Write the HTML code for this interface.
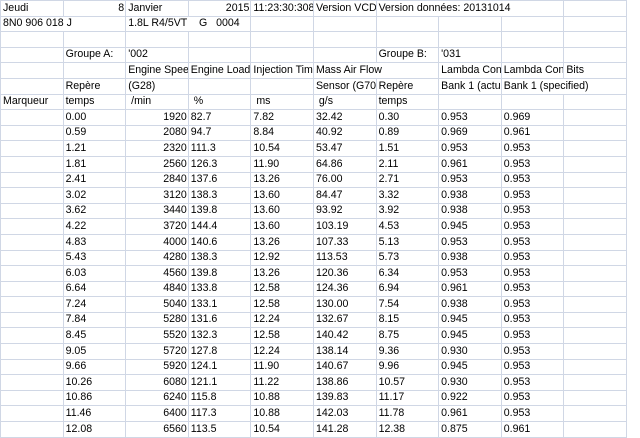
<!DOCTYPE html>
<html><head><meta charset="utf-8"><style>
html,body{margin:0;padding:0;background:#fff;width:640px;height:438px;overflow:hidden}
table{border-collapse:collapse;table-layout:fixed;width:626px;font-family:"Liberation Sans",sans-serif;font-size:10.6px;color:#000;position:absolute;left:0;top:0}
td{border:1px solid #d0d7e5;height:14.6px;padding:0 0 1px 2px;white-space:nowrap;overflow:hidden;line-height:13px;vertical-align:bottom;box-sizing:border-box}
td.r{text-align:right;padding:0 1px 1px 0}
tr{height:15.6px}
</style></head><body>
<table>
<colgroup><col style="width:62.6px"><col style="width:62.6px"><col style="width:62.6px"><col style="width:62.6px"><col style="width:62.6px"><col style="width:62.6px"><col style="width:62.6px"><col style="width:62.6px"><col style="width:62.6px"><col style="width:62.6px"></colgroup>
<tr><td>Jeudi</td><td class="r">8</td><td>Janvier</td><td class="r">2015</td><td>11:23:30:308</td><td>Version VCD</td><td colspan="3">Version données: 20131014</td><td></td></tr>
<tr><td colspan="2">8N0 906 018 J</td><td colspan="2">1.8L R4/5VT&nbsp;&nbsp;&nbsp; G&nbsp;&nbsp; 0004</td><td></td><td></td><td></td><td></td><td></td><td></td></tr>
<tr><td></td><td></td><td></td><td></td><td></td><td></td><td></td><td></td><td></td><td></td></tr>
<tr><td></td><td>Groupe A:</td><td>'002</td><td></td><td></td><td></td><td>Groupe B:</td><td>'031</td><td></td><td></td></tr>
<tr><td></td><td></td><td>Engine Speed</td><td>Engine Load</td><td>Injection Time</td><td colspan="2">Mass Air Flow</td><td>Lambda Control</td><td>Lambda Control</td><td>Bits</td></tr>
<tr><td></td><td>Repère</td><td>(G28)</td><td></td><td></td><td>Sensor (G70)</td><td>Repère</td><td>Bank 1 (actual)</td><td colspan="2">Bank 1 (specified)</td></tr>
<tr><td>Marqueur</td><td>temps</td><td>&nbsp;/min</td><td>&nbsp;%</td><td>&nbsp;ms</td><td>&nbsp;g/s</td><td>temps</td><td></td><td></td><td></td></tr>
<tr><td></td><td>0.00</td><td class="r">1920</td><td>82.7</td><td>7.82</td><td>32.42</td><td>0.30</td><td>0.953</td><td>0.969</td><td></td></tr>
<tr><td></td><td>0.59</td><td class="r">2080</td><td>94.7</td><td>8.84</td><td>40.92</td><td>0.89</td><td>0.969</td><td>0.961</td><td></td></tr>
<tr><td></td><td>1.21</td><td class="r">2320</td><td>111.3</td><td>10.54</td><td>53.47</td><td>1.51</td><td>0.953</td><td>0.953</td><td></td></tr>
<tr><td></td><td>1.81</td><td class="r">2560</td><td>126.3</td><td>11.90</td><td>64.86</td><td>2.11</td><td>0.961</td><td>0.953</td><td></td></tr>
<tr><td></td><td>2.41</td><td class="r">2840</td><td>137.6</td><td>13.26</td><td>76.00</td><td>2.71</td><td>0.953</td><td>0.953</td><td></td></tr>
<tr><td></td><td>3.02</td><td class="r">3120</td><td>138.3</td><td>13.60</td><td>84.47</td><td>3.32</td><td>0.938</td><td>0.953</td><td></td></tr>
<tr><td></td><td>3.62</td><td class="r">3440</td><td>139.8</td><td>13.60</td><td>93.92</td><td>3.92</td><td>0.938</td><td>0.953</td><td></td></tr>
<tr><td></td><td>4.22</td><td class="r">3720</td><td>144.4</td><td>13.60</td><td>103.19</td><td>4.53</td><td>0.945</td><td>0.953</td><td></td></tr>
<tr><td></td><td>4.83</td><td class="r">4000</td><td>140.6</td><td>13.26</td><td>107.33</td><td>5.13</td><td>0.953</td><td>0.953</td><td></td></tr>
<tr><td></td><td>5.43</td><td class="r">4280</td><td>138.3</td><td>12.92</td><td>113.53</td><td>5.73</td><td>0.938</td><td>0.953</td><td></td></tr>
<tr><td></td><td>6.03</td><td class="r">4560</td><td>139.8</td><td>13.26</td><td>120.36</td><td>6.34</td><td>0.953</td><td>0.953</td><td></td></tr>
<tr><td></td><td>6.64</td><td class="r">4840</td><td>133.8</td><td>12.58</td><td>124.36</td><td>6.94</td><td>0.961</td><td>0.953</td><td></td></tr>
<tr><td></td><td>7.24</td><td class="r">5040</td><td>133.1</td><td>12.58</td><td>130.00</td><td>7.54</td><td>0.938</td><td>0.953</td><td></td></tr>
<tr><td></td><td>7.84</td><td class="r">5280</td><td>131.6</td><td>12.24</td><td>132.67</td><td>8.15</td><td>0.945</td><td>0.953</td><td></td></tr>
<tr><td></td><td>8.45</td><td class="r">5520</td><td>132.3</td><td>12.58</td><td>140.42</td><td>8.75</td><td>0.945</td><td>0.953</td><td></td></tr>
<tr><td></td><td>9.05</td><td class="r">5720</td><td>127.8</td><td>12.24</td><td>138.14</td><td>9.36</td><td>0.930</td><td>0.953</td><td></td></tr>
<tr><td></td><td>9.66</td><td class="r">5920</td><td>124.1</td><td>11.90</td><td>140.67</td><td>9.96</td><td>0.945</td><td>0.953</td><td></td></tr>
<tr><td></td><td>10.26</td><td class="r">6080</td><td>121.1</td><td>11.22</td><td>138.86</td><td>10.57</td><td>0.930</td><td>0.953</td><td></td></tr>
<tr><td></td><td>10.86</td><td class="r">6240</td><td>115.8</td><td>10.88</td><td>139.83</td><td>11.17</td><td>0.922</td><td>0.953</td><td></td></tr>
<tr><td></td><td>11.46</td><td class="r">6400</td><td>117.3</td><td>10.88</td><td>142.03</td><td>11.78</td><td>0.961</td><td>0.953</td><td></td></tr>
<tr><td></td><td>12.08</td><td class="r">6560</td><td>113.5</td><td>10.54</td><td>141.28</td><td>12.38</td><td>0.875</td><td>0.961</td><td></td></tr>
</table>
</body></html>
